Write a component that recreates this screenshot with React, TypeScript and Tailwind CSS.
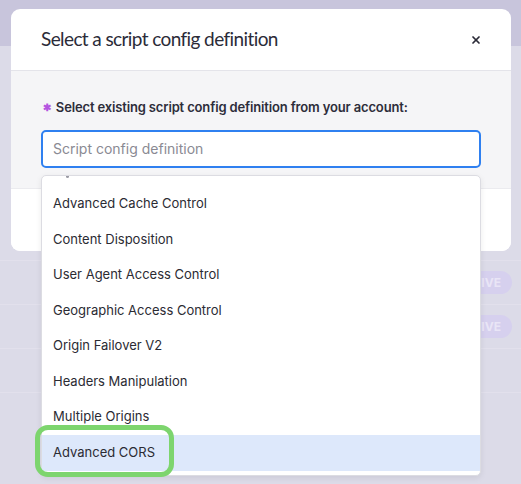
import { X } from "lucide-react";

const options = [
  "Advanced Cache Control",
  "Content Disposition",
  "User Agent Access Control",
  "Geographic Access Control",
  "Origin Failover V2",
  "Headers Manipulation",
  "Multiple Origins",
  "Advanced CORS",
];

const BackgroundRow = ({ pill }: { pill: boolean }) => (
  <div className="flex h-[44px] items-center justify-end border-b border-[#e2e0ec] pr-[9px]">
    {pill && (
      <span className="flex h-[23px] w-[96px] items-center justify-end rounded-full bg-[#d6d0ee] pr-[11px] text-[12px] font-bold text-[#e9e5f6]">
        ACTIVE
      </span>
    )}
  </div>
);

export default function App() {
  return (
    <div
      className="relative h-[484px] w-[521px] overflow-hidden bg-[#dcdbe8]"
      style={{ fontFamily: "Inter, 'Noto Sans', sans-serif" }}
    >
      {/* page behind the overlay */}
      <div className="h-[46px] bg-[#c8c5dc]" />
      <div className="h-[215px] border-b border-[#e2e0ec]" />
      <BackgroundRow pill />
      <BackgroundRow pill />
      <BackgroundRow pill={false} />

      {/* modal */}
      <div className="absolute left-[11px] top-[9px] w-[500px] rounded-[9px] bg-white">
        <div className="flex h-[62px] items-center justify-between border-b border-[#e4e4ea] pl-[30px] pr-[29px]">
          <h2
            className="text-[19px] font-normal tracking-[-0.6px] text-[#2b2b38]"
            style={{ fontFamily: "Lato, sans-serif" }}
          >
            Select a script config definition
          </h2>
          <X className="h-[12px] w-[12px] text-[#2b2b38]" strokeWidth={3.5} />
        </div>

        <div className="bg-[#f5f5f7] px-[30px] pb-[20px] pt-[27px]">
          <label className="flex items-center gap-[5px] pl-[2px] text-[13px] font-semibold tracking-[-0.15px] text-[#2d2d3a]">
            <span className="text-[10px] text-[#b455e0]">✱</span>
            Select existing script config definition from your account:
          </label>
          <div className="mt-[12px] flex h-[38px] items-center rounded-[5px] border-2 border-[#2f80f0] bg-white px-[10px] text-[14px] text-[#8a8a93]">
            Script config definition
          </div>
        </div>

        <div className="h-[63px] rounded-b-[9px] border-t border-[#ebebef] bg-white" />

        {/* dropdown, scrolled a little */}
        <div className="absolute left-[30px] top-[166px] w-[440px] overflow-hidden rounded-[5px] border border-[#dcdce2] bg-white pb-[4px] shadow-[0_2px_6px_rgba(0,0,0,0.08)]">
          <div className="flex h-[10px] items-start pl-[24px]">
            <span className="h-[2px] w-[3px] rounded-b-full bg-[#9a9aa3]" />
          </div>
          {options.map((o) => (
            <div
              key={o}
              className={`flex h-[35.57px] items-center px-[11px] text-[13px] text-[#2b2b33] ${
                o === "Advanced CORS" ? "bg-[#dde8fb]" : ""
              }`}
            >
              {o}
            </div>
          ))}
        </div>

        {/* green annotation */}
        <div className="absolute left-[24px] top-[416px] h-[52px] w-[139px] rounded-[13px] border-[5px] border-[#7dd56e]" />
      </div>
    </div>
  );
}
